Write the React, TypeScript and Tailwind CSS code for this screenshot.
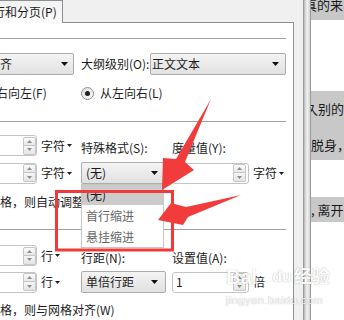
import React from 'react';

// little black triangle used on combo boxes
const Down = () => (
  <svg width="7" height="4" viewBox="0 0 7 4" className="shrink-0">
    <path d="M0 0H7L3.5 4Z" fill="#111" />
  </svg>
);

// caret after unit labels (字符▾ / 行▾)
const Mini = () => (
  <svg width="5" height="3" viewBox="0 0 5 3" className="ml-[2px] shrink-0">
    <path d="M0 0H5L2.5 3Z" fill="#222" />
  </svg>
);

const Spin: React.FC = () => (
  <div className="flex flex-col w-[13px] h-[18px] shrink-0">
    <div className="h-[9px] border border-[#c6c6c6] rounded-t-[2px] bg-linear-to-b from-[#fcfcfc] to-[#e8e8e8] flex items-center justify-center">
      <svg width="5" height="3" viewBox="0 0 5 3"><path d="M0 3H5L2.5 0Z" fill="#8d8d8d" /></svg>
    </div>
    <div className="h-[9px] border border-t-0 border-[#c6c6c6] rounded-b-[2px] bg-linear-to-b from-[#f6f6f6] to-[#e4e4e4] flex items-center justify-center">
      <svg width="5" height="3" viewBox="0 0 5 3"><path d="M0 0H5L2.5 3Z" fill="#8d8d8d" /></svg>
    </div>
  </div>
);

const Num: React.FC<{ className: string; value?: string }> = ({ className, value }) => (
  <div className={`h-[21px] border border-[#c4c4c4] rounded-[3px] bg-white flex items-center shrink-0 ${className}`}>
    <span className="pl-[3px] flex-1">{value}</span>
    <Spin />
  </div>
);

const Drop: React.FC<{ className: string; text: string }> = ({ className, text }) => (
  <div className={`h-[22px] border border-[#acacac] rounded-[2px] bg-linear-to-b from-[#f4f4f4] to-[#e1e1e1] flex items-center shrink-0 ${className}`}>
    <span className="flex-1 whitespace-nowrap">{text}</span>
    <Down />
  </div>
);

const Unit: React.FC<{ text: string }> = ({ text }) => (
  <span className="ml-[4px] flex items-center whitespace-nowrap">
    {text}
    <Mini />
  </span>
);

const App: React.FC = () => {
  return (
    <div className="relative w-[344px] h-[320px] overflow-hidden bg-[#f0f0f0] flex font-['Noto_Sans_CJK_SC',sans-serif] text-[12px] leading-none text-[#1b1b1b]">
      {/* dialog */}
      <div className="w-[303px] shrink-0 flex flex-col">
        <div className="h-[23px] flex shrink-0">
          <div className="w-[63px] h-[23px] border-t border-r border-[#8c8e94] bg-linear-to-b from-[#f2f2f2] to-[#fbfbfb] flex items-center overflow-hidden">
            <span className="ml-[-7px] whitespace-nowrap">行和分页(P)</span>
          </div>
          <div className="w-[231px] h-[23px] border-b border-[#8c8e94]" />
        </div>

        <div className="w-[294px] flex-1 bg-white border-r border-[#8c8e94] overflow-hidden">
          <div className="mr-[7px] flex flex-col">
            <div className="h-[15px]" />
            <div className="h-px bg-[#a0a0a0]" />

            {/* alignment / outline level */}
            <div className="mt-[14px] h-[22px] flex items-center">
              <div className="w-[81px] shrink-0 flex">
                <Drop className="ml-[-10px] w-[84px] pl-[9px] pr-[5px]" text="齐" />
              </div>
              <span className="w-[69px] shrink-0 whitespace-nowrap">大纲级别(O):</span>
              <Drop className="flex-1 pl-[1px] pr-[6px]" text="正文文本" />
            </div>

            {/* direction */}
            <div className="mt-[7px] h-[22px] flex items-center">
              <div className="w-[81px] shrink-0 overflow-visible">
                <span className="ml-[-4px] block whitespace-nowrap">右向左(F)</span>
              </div>
              <div className="w-[13px] h-[13px] rounded-full border border-[#8e8f8f] bg-linear-to-br from-[#dedede] to-[#fbfbfb] flex items-center justify-center">
                <div className="w-[5px] h-[5px] rounded-full bg-[#202020]" />
              </div>
              <span className="ml-[6px] whitespace-nowrap">从左向右(L)</span>
            </div>

            <div className="mt-[17px] h-px bg-[#a0a0a0]" />

            {/* indent */}
            <div className="mt-[13px] h-[21px] flex items-center">
              <div className="w-[81px] shrink-0 flex items-center">
                <Num className="ml-[-4px] w-[41px]" />
                <Unit text="字符" />
              </div>
              <span className="w-[91px] shrink-0 pt-[4px] whitespace-nowrap">特殊格式(S):</span>
              <span className="pt-[4px] whitespace-nowrap">度量值(Y):</span>
            </div>
            <div className="mt-[6px] h-[22px] flex items-center">
              <div className="w-[81px] shrink-0 flex items-center">
                <Num className="ml-[-4px] w-[41px]" />
                <Unit text="字符" />
              </div>
              <div className="w-[91px] shrink-0">
                <Drop className="w-[83px] pl-[4px] pr-[5px]" text="(无)" />
              </div>
              <Num className="w-[77px] pr-[2px]" />
              <Unit text="字符" />
            </div>
            <div className="mt-[8px] h-[20px] flex items-center whitespace-nowrap">格，则自动调整</div>

            <div className="mt-[17px] h-px bg-[#a0a0a0]" />

            {/* spacing */}
            <div className="mt-[15px] h-[21px] flex items-center">
              <div className="w-[81px] shrink-0 flex items-center">
                <Num className="ml-[-4px] w-[41px]" />
                <Unit text="行" />
              </div>
              <span className="w-[91px] shrink-0 pt-[4px] whitespace-nowrap">行距(N):</span>
              <span className="pt-[4px] whitespace-nowrap">设置值(A):</span>
            </div>
            <div className="mt-[5px] h-[22px] flex items-center">
              <div className="w-[81px] shrink-0 flex items-center">
                <Num className="ml-[-4px] w-[41px]" />
                <Unit text="行" />
              </div>
              <div className="w-[91px] shrink-0">
                <Drop className="w-[85px] pl-[4px] pr-[7px]" text="单倍行距" />
              </div>
              <Num className="w-[77px] pr-[2px]" value="1" />
              <span className="ml-[4px]">倍</span>
            </div>
            <div className="mt-[7px] h-[20px] flex items-center whitespace-nowrap">格，则与网格对齐(W)</div>
          </div>
        </div>
      </div>

      {/* window edge */}
      <div className="w-[8px] shrink-0 border-l border-[#9a9a9a] border-r border-[#7d7d7d] bg-linear-to-r from-[#b9b9b9] via-[#f2f2f2] to-[#d4d4d4]" />

      {/* document behind */}
      <div className="flex-1 bg-white overflow-hidden text-[13px] text-[#1a1a1a] whitespace-nowrap">
        <div className="h-[20px] bg-[#c8c8c8]">
          <span className="block ml-[-7px] leading-[10px]">真的来</span>
        </div>
        <div className="h-[71px]" />
        <div className="h-[69px] bg-[#c8c8c8]">
          <div className="h-[36px] leading-[36px] ml-[-6px]">久别的</div>
          <div className="h-[33px] leading-[36px]">脱身，</div>
        </div>
        <div className="h-[37px]" />
        <div className="h-[25px] leading-[25px] bg-[#c8c8c8]">, 离开</div>
      </div>

      {/* open list of the 特殊格式 combo */}
      <div className="absolute left-[81px] top-[184px] w-[83px] h-[64px] border border-[#c6c6c6] bg-white flex flex-col">
        <div className="h-[20px] bg-[#cbcbcb] pl-[4px] flex items-center">(无)</div>
        <div className="h-[21px] pl-[4px] flex items-center text-[#666]">首行缩进</div>
        <div className="h-[21px] pl-[4px] flex items-center text-[#666]">悬挂缩进</div>
      </div>

      {/* watermark */}
      <div className="absolute left-[226px] top-[262px] text-white opacity-90 [text-shadow:0_0_1px_rgba(0,0,0,0.45)] font-['Liberation_Sans','Noto_Sans_CJK_SC',sans-serif]">
        <div className="flex items-end">
          <span className="text-[20px] font-bold leading-[30px]">Bai</span>
          <span className="ml-[15px] text-[16px] font-bold leading-[30px]">du</span>
          <span className="ml-[2px] text-[18px] font-bold leading-[30px]">经验</span>
        </div>
        <div className="mt-[2px] text-[11px] leading-[12px] tracking-[0.5px]">jingyan.baidu.com</div>
      </div>

      {/* red annotation */}
      <svg className="absolute left-0 top-0 pointer-events-none" width="344" height="320" viewBox="0 0 344 320">
        <rect x="56.5" y="191.5" width="116" height="58.5" fill="none" stroke="#f03a3a" strokeWidth="3" />
        <path d="M211 99L185 162L194 170L162 190L163 158L176 159Z" fill="#f23c3c" />
        <path d="M241 195L186 207L171 203L158 220L183 225L188 217Z" fill="#f23c3c" />
      </svg>
    </div>
  );
};

export default App;
